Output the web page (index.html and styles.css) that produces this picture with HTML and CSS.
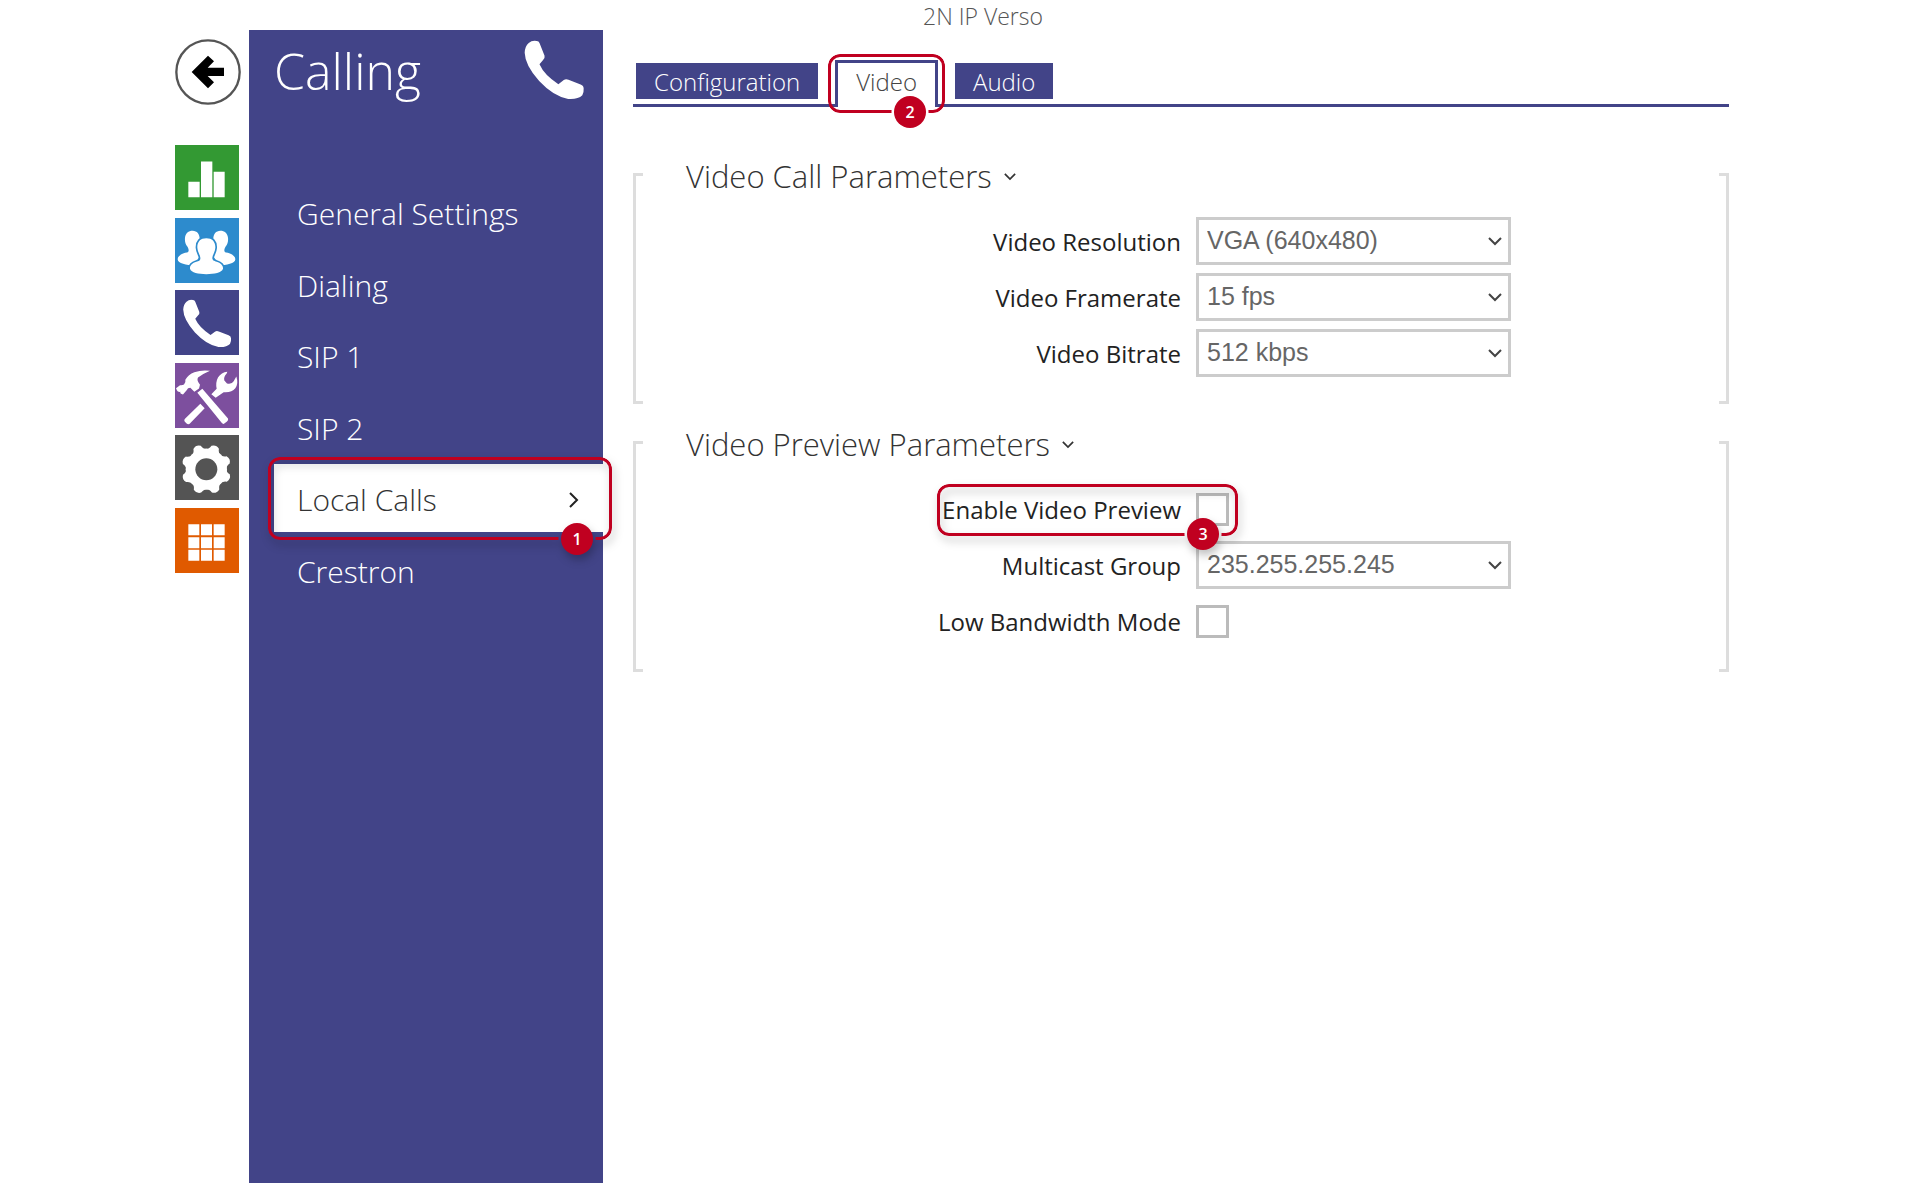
FILE: index.html
```html
<!DOCTYPE html>
<html lang="en">
<head>
  <meta charset="UTF-8">
  <meta name="viewport" content="width=device-width, initial-scale=1.0">
  <title>2N IP Verso</title>
  <link rel="stylesheet" href="styles.css">
</head>
<body>
  <svg width="0" height="0" class="defs" aria-hidden="true">
    <symbol id="phone" viewBox="0 0 178 178">
      <path d="M14 9Q24 0 38 3Q44 3 46 9L61 47Q63 55 56 60L46 72Q60 104 102 131L118 119Q124 115 132 118L168 132Q177 135 177 144Q178 154 173 164Q160 177 131 175Q88 168 45 122Q3 75 2 38Q3 18 14 9Z"/>
    </symbol>
    <symbol id="chevron" viewBox="0 0 14 10">
      <path d="M1 2L7 8L13 2" fill="none" stroke="currentColor" stroke-width="2"/>
    </symbol>
  </svg>
  <div class="page">
    <nav class="rail">
      <a class="back" href="#" aria-label="Back">
        <svg viewBox="0 0 198 198"><circle cx="99" cy="99" r="95" fill="#fff" stroke="#555" stroke-width="7"/><path d="M50 99L99 50L117 67L98 86H147V111H98L117 130L99 148Z"/></svg>
      </a>
      <div class="modules">
        <a class="module status" href="#" aria-label="Status">
          <svg viewBox="0 0 192 192"><path d="M40 109h34v46H40zM78 48h34v107H78zM116 79h33v76h-33z"/></svg>
        </a>
        <a class="module directory" href="#" aria-label="Directory">
          <svg viewBox="0 0 192 192">
            <path id="person" d="M53 37C67 37 75 49 74 64C73 76 69 82 67 90C66 98 70 102 78 106L58 140C35 140 8 134 8 122C8 110 27 103 36 102C43 100 42 92 37 84C31 76 29 68 30 58C32 44 40 37 53 37Z"/>
            <use href="#person" transform="matrix(-1 0 0 1 189 0)"/>
            <path class="front" d="M94 59C112 59 122 70 121 88C120 102 113 108 112 118C112 126 117 127 125 130C137 134 145 141 144 151C140 163 118 167 94 167C70 167 49 163 45 151C44 141 52 134 64 130C72 127 77 126 76 118C75 108 68 102 67 88C66 70 76 59 94 59Z"/>
          </svg>
        </a>
        <a class="module calling" href="#" aria-label="Calling">
          <svg viewBox="0 0 192 192"><use href="#phone" x="23" y="26" width="146" height="146"/></svg>
        </a>
        <a class="module services" href="#" aria-label="Services">
          <svg viewBox="0 0 192 192">
            <path d="M3 74L15 65Q22 66 27 63Q33 57 31 49Q40 32 58 26Q82 18 105 22Q84 31 69 42Q64 50 75 64L72 75L58 85L46 73Q38 73 35 80L24 93Q14 91 16 85Q8 86 6 81Z"/>
            <path d="M67 88L82 76L159 165Q161 170 156 174L147 181Q143 182 140 178Z"/>
            <path d="M76 121L89 134L44 181Q39 184 34 179L29 174Q26 170 30 166ZM109 92L125 76Q121 57 129 42Q139 27 157 25L155 30Q145 40 148 51L156 60Q169 64 176 53L184 39Q191 60 181 74Q170 88 146 86L122 103Z"/>
          </svg>
        </a>
        <a class="module system" href="#" aria-label="System">
          <svg viewBox="0 0 192 192">
            <circle cx="94" cy="101" r="62"/>
            <g id="teeth"><path id="tooth" d="M66 50Q80 42 82 30Q94 21 106 30Q108 42 122 50V152Q108 160 106 172Q94 181 82 172Q80 160 66 152Z" transform="rotate(22 94 101)"/><use href="#tooth" transform="rotate(45 94 101)"/></g>
            <use href="#teeth" transform="rotate(90 94 101)"/>
            <circle class="hole" cx="94" cy="101" r="33"/>
          </svg>
        </a>
        <a class="module apps" href="#" aria-label="Applications">
          <svg viewBox="0 0 192 192"><path d="M40 47h33v33H40zM78 47h33v33H78zM116 47h33v33h-33zM40 86h33v33H40zM78 86h33v33H78zM116 86h33v33h-33zM40 124h33v33H40zM78 124h33v33H78zM116 124h33v33h-33z"/></svg>
        </a>
      </div>
    </nav>

    <aside class="sidebar">
      <div class="sidebar-head">
        <h1>Calling</h1>
        <svg><use href="#phone"/></svg>
      </div>
      <ul class="menu">
        <li><a href="#">General Settings</a></li>
        <li><a href="#">Dialing</a></li>
        <li><a href="#">SIP 1</a></li>
        <li><a href="#">SIP 2</a></li>
        <li class="active">
          <a href="#">Local Calls <svg class="arrow" viewBox="0 0 10 16"><path d="M1 1L8 8L1 15" fill="none" stroke="#222" stroke-width="2"/></svg></a>
          <span class="callout callout-menu"><span class="ring"></span><span class="badge">1</span></span>
        </li>
        <li><a href="#">Crestron</a></li>
      </ul>
    </aside>

    <main>
      <header>2N IP Verso</header>
      <nav class="tabs">
        <a class="tab" href="#">Configuration</a>
        <a class="tab current" href="#">Video
          <span class="callout callout-tab"><span class="ring"></span><span class="badge">2</span></span>
        </a>
        <a class="tab" href="#">Audio</a>
      </nav>

      <section class="group">
        <h2>Video Call Parameters <svg><use href="#chevron"/></svg></h2>
        <div class="fields">
          <div class="field">
            <label for="resolution">Video Resolution</label>
            <div class="select"><select id="resolution"><option>VGA (640x480)</option></select><svg><use href="#chevron"/></svg></div>
          </div>
          <div class="field">
            <label for="framerate">Video Framerate</label>
            <div class="select"><select id="framerate"><option>15 fps</option></select><svg><use href="#chevron"/></svg></div>
          </div>
          <div class="field">
            <label for="bitrate">Video Bitrate</label>
            <div class="select"><select id="bitrate"><option>512 kbps</option></select><svg><use href="#chevron"/></svg></div>
          </div>
        </div>
      </section>

      <section class="group">
        <h2>Video Preview Parameters <svg><use href="#chevron"/></svg></h2>
        <div class="fields">
          <div class="field">
            <label for="preview">Enable Video Preview</label>
            <input type="checkbox" id="preview">
            <span class="callout callout-field"><span class="ring"></span><span class="badge">3</span></span>
          </div>
          <div class="field">
            <label for="multicast">Multicast Group</label>
            <div class="select"><select id="multicast"><option>235.255.255.245</option></select><svg><use href="#chevron"/></svg></div>
          </div>
          <div class="field">
            <label for="bandwidth">Low Bandwidth Mode</label>
            <input type="checkbox" id="bandwidth">
          </div>
        </div>
      </section>
    </main>
  </div>
</body>
</html>
```

FILE: styles.css
```css
*, *::before, *::after { box-sizing: border-box; }
body { margin: 0; background: #fff; color: #222; font-family: "Open Sans", "Noto Sans", sans-serif; }
a { color: inherit; text-decoration: none; }
svg { display: block; }
.defs { position: absolute; }

.page { display: flex; padding: 0 191px 0 175px; }

/* module icons */
.rail { width: 74px; padding-top: 39px; flex-shrink: 0; }
.back, .back svg { display: block; width: 66px; height: 66px; }
.modules { display: flex; flex-direction: column; justify-content: space-between; width: 64px; height: 428px; margin-top: 40px; }
.module { display: block; height: 65px; fill: #fff; }
.module svg { width: 64px; height: 65px; }
.status { background: #339933; }
.directory { background: #2d8bcd; }
.front { stroke: #2d8bcd; stroke-width: 10; paint-order: stroke; }
.calling { background: #424488; }
.services { background: #7d4f9e; }
.system { background: #545454; }
.hole { fill: #545454; }
.apps { background: #e05a00; }

/* sidebar */
.sidebar { width: 354px; min-height: calc(100vh - 47px); margin: 30px 0 17px; flex-shrink: 0; align-self: flex-start; background: #424488; color: #fff; }
.sidebar-head { display: flex; justify-content: space-between; height: 148px; padding: 10px 19px 0 25px; }
.sidebar-head h1 { margin: 0; font-size: 50px; line-height: 62px; font-weight: 300; }
.sidebar-head svg { width: 60px; height: 60px; fill: #fff; }
.menu { display: flex; flex-direction: column; justify-content: space-between; height: 426px; margin: 0; padding: 0 0 0 25px; list-style: none; }
.menu li { position: relative; }
.menu a { display: flex; align-items: center; justify-content: space-between; height: 68px; padding: 3px 24px 0 23px; font-size: 30px; font-weight: 300; }
.menu .active a { background: #fff; color: #333; }
.arrow { width: 10px; height: 16px; }

/* content */
main { flex: 1; margin-left: 30px; }
header { padding-left: 290px; height: 60px; font-size: 23px; line-height: 32px; font-weight: 300; color: #555; }
.tabs { display: flex; gap: 17px; height: 47px; padding-left: 3px; border-bottom: 3px solid #424488; }
.tab { height: 36px; margin-top: 3px; padding: 0 18px; background: #424488; color: #fff; font-size: 24px; line-height: 38px; font-weight: 300; }
.tab.current { position: relative; height: 47px; margin-top: 0; border: 3px solid #424488; border-bottom: 0; background: #fff; color: #444; }

.group { position: relative; margin-top: 20px; padding-bottom: 27px; }
.tabs + .group { margin-top: 49px; }
.group::before, .group::after { content: ""; position: absolute; top: 17px; bottom: 0; width: 10px; border: 3px solid #ddd; pointer-events: none; }
.group::before { left: 0; border-right: 0; }
.group::after { right: 0; border-left: 0; }
.group h2 { display: flex; align-items: center; gap: 12px; margin: 0 0 21px; padding-left: 53px; font-size: 31px; line-height: 40px; font-weight: 300; color: #333; }
.group h2 svg { width: 12px; height: 9px; }

.fields { display: flex; flex-direction: column; gap: 8px; }
.field { position: relative; display: flex; align-items: center; gap: 15px; height: 48px; }
.field label { flex: 0 0 50%; text-align: right; font-size: 24px; }
.select { position: relative; width: 315px; }
.select select { appearance: none; width: 100%; height: 48px; padding: 0 36px 2px 8px; border: 3px solid #ccc; border-radius: 0; background: #fff; color: #666; font-family: "Liberation Sans", Arial, sans-serif; font-size: 25px; }
.select svg { position: absolute; right: 9px; top: 19px; width: 14px; height: 10px; color: #444; pointer-events: none; }
.field input { appearance: none; width: 33px; height: 33px; margin: 0; border: 3px solid #bbb; background: #fff; }

/* numbered callouts, --x/--y is the badge centre inside the ring */
.callout { position: absolute; z-index: 1; pointer-events: none; filter: drop-shadow(2px 5px 4px rgba(0, 0, 0, 0.25)); }
.ring { position: absolute; inset: 0; border: 3px solid #c00020; border-radius: 12px; mask-image: radial-gradient(circle at var(--x) var(--y), transparent 18px, #000 19px); }
.badge { position: absolute; left: calc(var(--x) - 16px); top: calc(var(--y) - 16px); width: 32px; height: 32px; border-radius: 50%; background: #c00020; color: #fff; font-size: 16px; line-height: 32px; font-weight: 600; text-align: center; }
.callout-menu { --x: 309px; --y: 82px; left: -6px; right: -9px; top: -7px; bottom: -8px; }
.callout-tab { --x: 82px; --y: 58px; left: -10px; right: -10px; top: -9px; bottom: -6px; filter: none; }
.callout-field { --x: 266px; --y: 50px; left: 304px; width: 301px; top: -1px; height: 52px; }
```
